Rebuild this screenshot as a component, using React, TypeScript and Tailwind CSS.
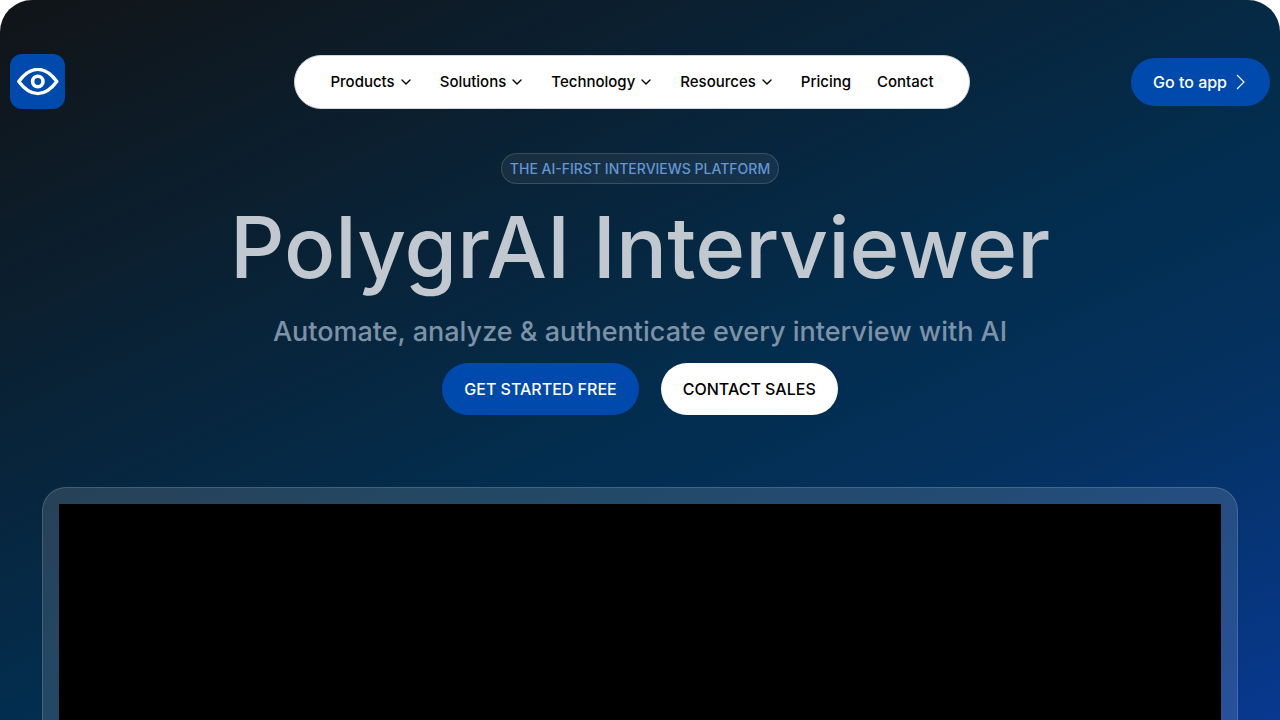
import { ChevronDown } from 'lucide-react'

const navItems = [
  { label: 'Products', hasMenu: true },
  { label: 'Solutions', hasMenu: true },
  { label: 'Technology', hasMenu: true },
  { label: 'Resources', hasMenu: true },
  { label: 'Pricing', hasMenu: false },
  { label: 'Contact', hasMenu: false }
]

function Logo() {
  return (
    <a href="#home" aria-label="PolygrAI home" className="flex size-[55px] items-center justify-center rounded-xl bg-[#004aad]">
      <svg viewBox="0 0 42 28" className="h-7 w-[42px]" fill="none" stroke="white" strokeWidth="3.4" strokeLinejoin="round">
        <path d="M1.800 13.500C8 5 14 1.400 20.800 1.400S33.500 5 39.800 13.500C33.500 22 28 25.600 20.800 25.600S8 22 1.800 13.500Z" />
        <circle cx="20.800" cy="13.500" r="5.200" strokeWidth="3.600" />
      </svg>
    </a>
  )
}

function Header() {
  return (
    <header className="flex items-center justify-between px-[10px] pt-[54px]">
      <div className="flex flex-1">
        <Logo />
      </div>
      <nav className="mr-4 flex h-[54px] items-center gap-[26px] rounded-full border border-gray-300 bg-white px-[35px]">
        {navItems.map((item) =>
          item.hasMenu ? (
            <button key={item.label} type="button" className="flex items-center gap-[3px] text-[15px] leading-6 font-medium text-black">
              {item.label}
              <ChevronDown className="size-4" strokeWidth={2} />
            </button>
          ) : (
            <a key={item.label} href={`#${item.label.toLowerCase()}`} className="text-[15px] leading-6 font-medium text-black">
              {item.label}
            </a>
          )
        )}
      </nav>
      <div className="flex flex-1 justify-end">
        <a href="#app" className="flex h-12 items-center gap-2 rounded-full bg-[#004aad] px-[22px] text-base font-medium text-white">
          Go to app
          <svg viewBox="0 0 13 16" className="h-4 w-[13px]" fill="none" stroke="currentColor" strokeWidth="1.100">
            <path d="M2 1l7 7-7 7" />
          </svg>
        </a>
      </div>
    </header>
  )
}

export default function App() {
  return (
    <div className="bg-white font-['Inter',sans-serif]">
      <main className="rounded-t-[32px] bg-[linear-gradient(155deg,#111417_0px,#032d4e_650px,#04315f_860px,#08388f_1190px,#004aad_1600px)] pb-16">
        <Header />
        <section className="flex flex-col items-center pt-[44px] text-center">
          <p className="flex h-[31px] items-center rounded-full border border-white/15 bg-white/6 px-2 text-sm font-medium text-[#6496d2]">
            THE AI-FIRST INTERVIEWS PLATFORM
          </p>
          <h1 className="mt-3 text-[85px] leading-[104px] font-medium text-[#c1c8d0]">PolygrAI Interviewer</h1>
          <p className="mt-[14px] text-[27px] leading-9 font-medium text-[#7d92a6]">
            Automate, analyze &amp; authenticate every interview with AI
          </p>
          <div className="mt-[13px] flex gap-[22px]">
            <a href="#start" className="flex h-[52px] items-center rounded-full bg-[#004aad] px-[22px] text-base font-medium text-white">
              GET STARTED FREE
            </a>
            <a href="#sales" className="flex h-[52px] items-center rounded-full bg-white px-[22px] text-base font-medium text-black">
              CONTACT SALES
            </a>
          </div>
        </section>
        <div className="mx-[42px] mt-[72px] rounded-3xl border border-white/15 bg-white/13 p-4">
          <div className="aspect-video bg-black" />
        </div>
      </main>
    </div>
  )
}
